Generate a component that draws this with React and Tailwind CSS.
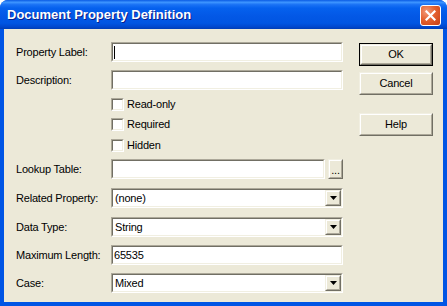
import React from 'react';

const Sunken = ({ className = '', children }) => (
  <div className={`border border-[#aca899] border-r-white border-b-white ${className}`}>
    <div className="h-full w-full border border-[#716f64] border-r-[#f1efe2] border-b-[#f1efe2] bg-white flex items-center">
      {children}
    </div>
  </div>
);

const Raised = ({ className = '', children }) => (
  <div className={`border border-[#f1efe2] border-r-[#716f64] border-b-[#716f64] ${className}`}>
    <div className="h-full w-full border border-white border-r-[#aca899] border-b-[#aca899] bg-[#ece9d8] flex items-center justify-center">
      {children}
    </div>
  </div>
);

const Arrow = () => (
  <svg width="7" height="4" viewBox="0 0 7 4">
    <path d="M0 0h7L3.5 4z" fill="#000" />
  </svg>
);

const Combo = ({ value }) => (
  <Sunken className="w-[232px] h-[20px]">
    <span className="flex-1 pl-[2px]">{value}</span>
    <Raised className="w-[16px] h-[16px]">
      <Arrow />
    </Raised>
  </Sunken>
);

const Row = ({ label, children, className = '' }) => (
  <div className={`flex items-center h-[20px] ${className}`}>
    <span className="w-[95px]">{label}</span>
    {children}
  </div>
);

const Check = ({ label, className = '' }) => (
  <div className={`flex items-center h-[13px] pl-[95px] ${className}`}>
    <Sunken className="w-[13px] h-[13px]" />
    <span className="ml-[3px]">{label}</span>
  </div>
);

const Button = ({ children, isDefault, className = '' }) => (
  <div className={`w-[74px] h-[23px] ${isDefault ? 'border border-black' : ''} ${className}`}>
    <Raised className="w-full h-full">{children}</Raised>
  </div>
);

export default function App() {
  return (
    <div className="w-[447px] h-[306px] flex flex-col rounded-t-[8px] overflow-hidden bg-[#0055e5] font-['Liberation_Sans',Arial,sans-serif] text-[11px] tracking-[-0.2px] text-black">
      {/* Title bar */}
      <div className="h-[29px] shrink-0 flex items-center pl-[7px] pr-[6px] bg-[linear-gradient(to_bottom,#0a5be4_0%,#3d95ff_8%,#1a72f5_16%,#0561ee_28%,#0358e6_55%,#0055e2_80%,#0048cf_92%,#003db5_100%)]">
        <span className="flex-1 text-white font-bold text-[13px] tracking-normal [text-shadow:1px_1px_0_#0a1e8c]">
          Document Property Definition
        </span>
        <div className="w-[21px] h-[21px] mt-[1px] rounded-[3px] border border-white bg-[radial-gradient(circle_at_30%_30%,#f29a7a_0%,#e4612f_45%,#c83d12_100%)] flex items-center justify-center">
          <svg width="11" height="11" viewBox="0 0 11 11">
            <path d="M1.5 1.5l8 8M9.5 1.5l-8 8" stroke="#fff" strokeWidth="2.2" strokeLinecap="square" />
          </svg>
        </div>
      </div>

      {/* Body */}
      <div className="flex-1 mx-[4px] mb-[4px] bg-[#ece9d8] flex pl-[12px] pt-[13px] pr-[10px]">
        <div className="w-[327px] flex flex-col">
          <Row label="Property Label:">
            <Sunken className="w-[232px] h-[20px]">
              <span className="ml-[1px] w-[1px] h-[13px] bg-black" />
            </Sunken>
          </Row>
          <Row label="Description:" className="mt-[8px]">
            <Sunken className="w-[232px] h-[20px]" />
          </Row>
          <Check label="Read-only" className="mt-[8px]" />
          <Check label="Required" className="mt-[7px]" />
          <Check label="Hidden" className="mt-[8px]" />
          <Row label="Lookup Table:" className="mt-[7px]">
            <Sunken className="w-[215px] h-[20px]" />
            <Raised className="ml-[3px] w-[15px] h-[20px]">
              <span className="self-end pb-[1px] leading-none">...</span>
            </Raised>
          </Row>
          <Row label="Related Property:" className="mt-[9px]">
            <Combo value="(none)" />
          </Row>
          <Row label="Data Type:" className="mt-[9px]">
            <Combo value="String" />
          </Row>
          <Row label="Maximum Length:" className="mt-[8px]">
            <Sunken className="w-[232px] h-[20px]">
              <span className="pl-[1px]">65535</span>
            </Sunken>
          </Row>
          <Row label="Case:" className="mt-[8px]">
            <Combo value="Mixed" />
          </Row>
        </div>

        <div className="ml-[16px] mt-[1px] flex flex-col">
          <Button isDefault>OK</Button>
          <Button className="mt-[6px]">Cancel</Button>
          <Button className="mt-[18px]">Help</Button>
        </div>
      </div>
    </div>
  );
}
